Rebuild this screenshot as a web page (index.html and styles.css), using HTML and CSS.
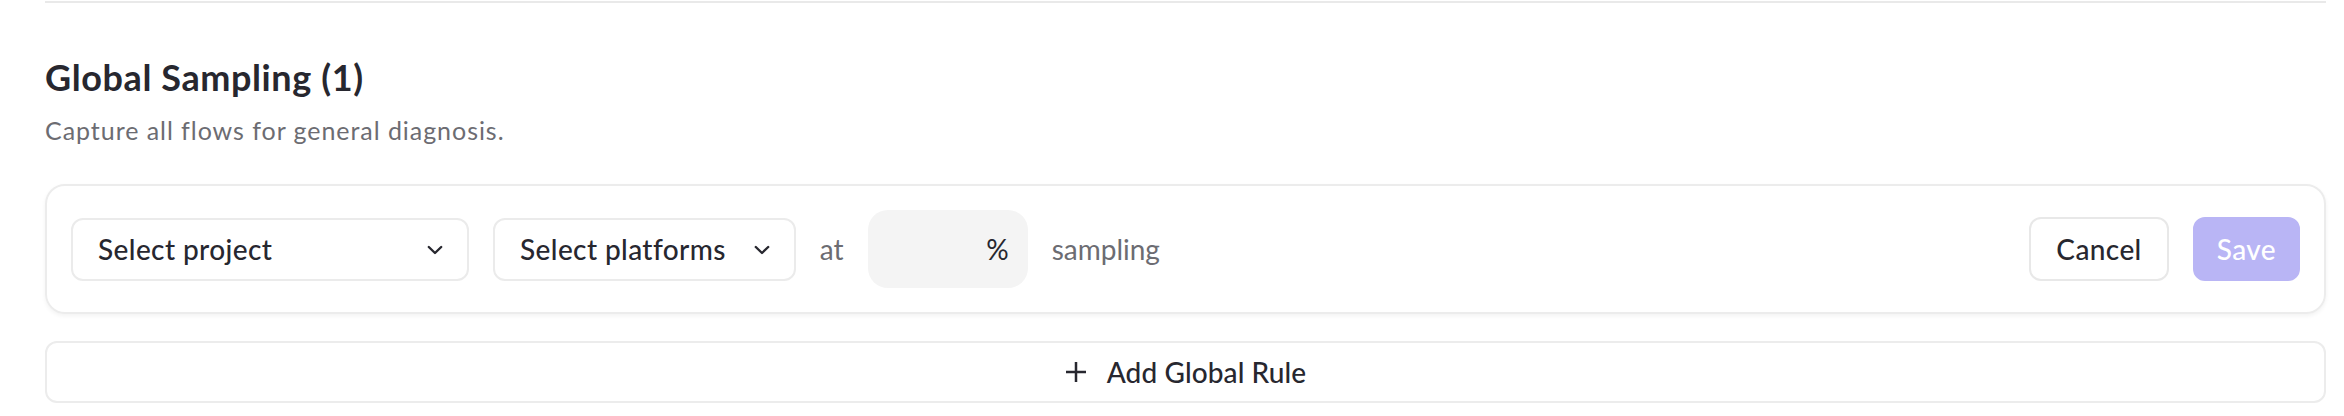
FILE: index.html
```html
<!DOCTYPE html>
<html lang="en">
<head>
<meta charset="utf-8">
<title>Global Sampling</title>
<link rel="stylesheet" href="styles.css">
</head>
<body>
<main class="page">
  <div class="divider"></div>
  <h2 class="title">Global Sampling (1)</h2>
  <p class="subtitle">Capture all flows for general diagnosis.</p>

  <section class="rule-card">
    <button class="select select-project" type="button">
      <span>Select project</span>
      <svg class="chevron" viewBox="0 0 16 16" width="16" height="16" aria-hidden="true"><path d="M1.8 5 L8 11 L14.2 5" fill="none" stroke="currentColor" stroke-width="2.4" stroke-linecap="round" stroke-linejoin="round"/></svg>
    </button>
    <button class="select select-platforms" type="button">
      <span>Select platforms</span>
      <svg class="chevron" viewBox="0 0 16 16" width="16" height="16" aria-hidden="true"><path d="M1.8 5 L8 11 L14.2 5" fill="none" stroke="currentColor" stroke-width="2.4" stroke-linecap="round" stroke-linejoin="round"/></svg>
    </button>
    <span class="muted">at</span>
    <div class="percent-input"><span>%</span></div>
    <span class="muted">sampling</span>
    <div class="actions">
      <button class="btn btn-cancel" type="button">Cancel</button>
      <button class="btn btn-save" type="button" disabled>Save</button>
    </div>
  </section>

  <button class="add-rule" type="button">
    <svg class="plus" viewBox="0 0 22 22" width="22" height="22" aria-hidden="true"><path d="M11 1 V21 M1 11 H21" fill="none" stroke="currentColor" stroke-width="2.5"/></svg>
    <span>Add Global Rule</span>
  </button>
</main>
</body>
</html>
```

FILE: styles.css
```css
* {
  box-sizing: border-box;
}

html, body {
  margin: 0;
  padding: 0;
  background: #ffffff;
}

body {
  font-family: "Lato", "Liberation Sans", sans-serif;
  color: #27272f;
}

.page {
  padding: 1px 18px 0 45px;
  display: flex;
  flex-direction: column;
}

.divider {
  height: 2px;
  background: #e9e9e9;
}

.title {
  margin: 52px 0 0 0;
  font-size: 36px;
  line-height: 44px;
  letter-spacing: 0.6px;
  font-weight: 700;
  color: #27272f;
}

.subtitle {
  margin: 16px 0 0 0;
  font-size: 25px;
  line-height: 30px;
  letter-spacing: 0.95px;
  font-weight: 400;
  color: #6c6c72;
}

.rule-card {
  margin-top: 39px;
  border: 2px solid #ececec;
  border-radius: 20px;
  padding: 24px;
  display: flex;
  align-items: center;
  gap: 24px;
  box-shadow: 0 2px 4px rgba(0, 0, 0, 0.05);
}

button {
  font-family: inherit;
  margin: 0;
  cursor: pointer;
}

.select {
  height: 63px;
  border: 2px solid #ebebeb;
  border-radius: 12px;
  background: #ffffff;
  padding: 0 24px 0 25px;
  display: flex;
  align-items: center;
  justify-content: space-between;
  font-size: 28px;
  letter-spacing: 0.4px;
  font-weight: 500;
  color: #27272f;
}

.select-project {
  width: 398px;
}

.select-platforms {
  gap: 28px;
}

.chevron {
  display: block;
  flex: none;
  margin-top: 2px;
}

.muted {
  font-size: 28px;
  color: #6c6c72;
  font-weight: 400;
}

.percent-input {
  width: 160px;
  height: 78px;
  background: #f4f4f4;
  border-radius: 20px;
  display: flex;
  align-items: center;
  justify-content: flex-end;
  padding-right: 19px;
  font-size: 28px;
  color: #27272f;
}

.actions {
  margin-left: auto;
  display: flex;
  align-items: center;
  gap: 24px;
}

.btn {
  height: 64px;
  border-radius: 12px;
  padding: 0 25px;
  font-size: 28px;
  letter-spacing: 0.4px;
  font-weight: 500;
}

.btn-cancel {
  background: #ffffff;
  border: 2px solid #e8e8e8;
  color: #27272f;
}

.btn-save {
  padding: 0 22px;
  background: #b9b5f5;
  border: 2px solid #b9b5f5;
  color: #ffffff;
  cursor: default;
}

.add-rule {
  margin-top: 27px;
  height: 62px;
  width: 100%;
  border: 2px solid #ececec;
  border-radius: 12px;
  background: #ffffff;
  display: flex;
  align-items: center;
  justify-content: center;
  gap: 20px;
  font-size: 28px;
  letter-spacing: 0.1px;
  font-weight: 500;
  color: #27272f;
}

.plus {
  display: block;
  flex: none;
}
```
